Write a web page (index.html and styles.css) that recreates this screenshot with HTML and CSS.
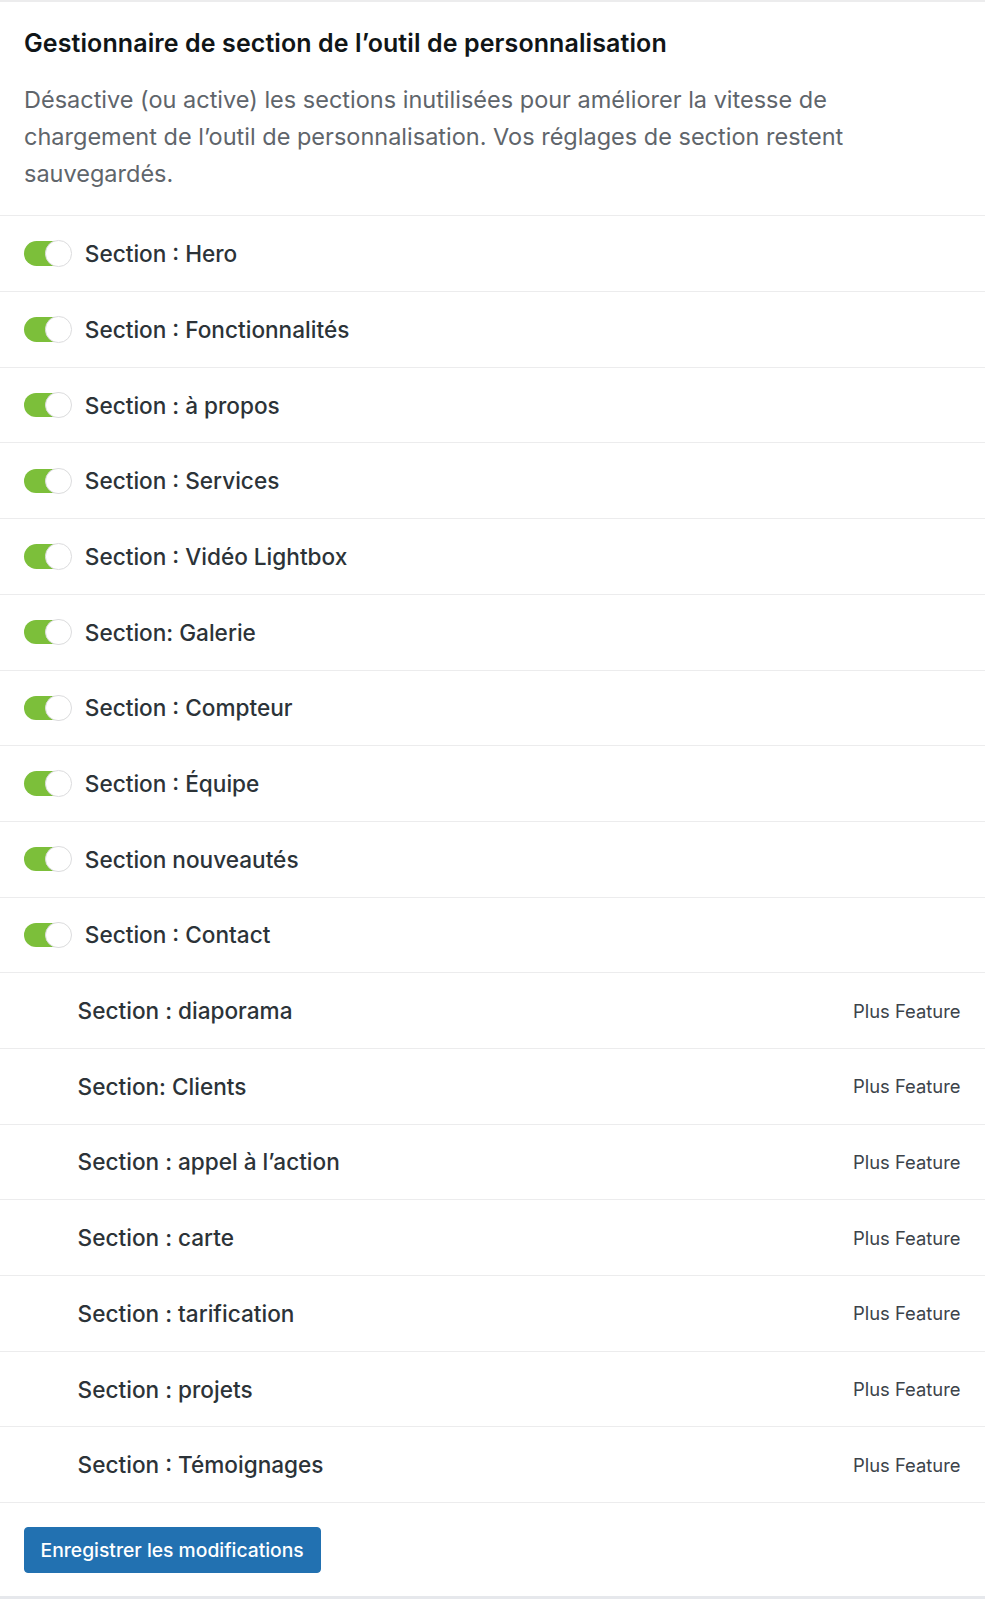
FILE: index.html
```html
<!DOCTYPE html>
<html lang="fr">
<head>
<meta charset="utf-8">
<link rel="stylesheet" href="styles.css">
</head>
<body>
<div class="panel">
  <div class="header">
    <h2 class="title">Gestionnaire de section de l’outil de personnalisation</h2>
    <p class="desc">Désactive (ou active) les sections inutilisées pour améliorer la vitesse de chargement de l’outil de personnalisation. Vos réglages de section restent sauvegardés.</p>
  </div>
  <ul class="list">
    <li class="row"><span class="toggle"><span class="knob"></span></span><span class="label">Section : Hero</span></li>
    <li class="row"><span class="toggle"><span class="knob"></span></span><span class="label">Section : Fonctionnalités</span></li>
    <li class="row"><span class="toggle"><span class="knob"></span></span><span class="label">Section : à propos</span></li>
    <li class="row"><span class="toggle"><span class="knob"></span></span><span class="label">Section : Services</span></li>
    <li class="row"><span class="toggle"><span class="knob"></span></span><span class="label">Section : Vidéo Lightbox</span></li>
    <li class="row"><span class="toggle"><span class="knob"></span></span><span class="label">Section: Galerie</span></li>
    <li class="row"><span class="toggle"><span class="knob"></span></span><span class="label">Section : Compteur</span></li>
    <li class="row"><span class="toggle"><span class="knob"></span></span><span class="label">Section : Équipe</span></li>
    <li class="row"><span class="toggle"><span class="knob"></span></span><span class="label">Section nouveautés</span></li>
    <li class="row"><span class="toggle"><span class="knob"></span></span><span class="label">Section : Contact</span></li>
    <li class="row plus"><span class="label">Section : diaporama</span><span class="badge">Plus Feature</span></li>
    <li class="row plus"><span class="label">Section: Clients</span><span class="badge">Plus Feature</span></li>
    <li class="row plus"><span class="label">Section : appel à l’action</span><span class="badge">Plus Feature</span></li>
    <li class="row plus"><span class="label">Section : carte</span><span class="badge">Plus Feature</span></li>
    <li class="row plus"><span class="label">Section : tarification</span><span class="badge">Plus Feature</span></li>
    <li class="row plus"><span class="label">Section : projets</span><span class="badge">Plus Feature</span></li>
    <li class="row plus"><span class="label">Section : Témoignages</span><span class="badge">Plus Feature</span></li>
  </ul>
  <div class="footer">
    <button class="save" type="button">Enregistrer les modifications</button>
  </div>
</div>
</body>
</html>
```
FILE: styles.css
```css
* { box-sizing: border-box; }
html, body { margin: 0; padding: 0; background: #fff; }
body {
  font-family: Inter, "Noto Sans", "Liberation Sans", sans-serif;
  color: #1d2327;
}
.panel {
  width: 985px;
  border-top: 2px solid #ececed;
  border-bottom: 3px solid #e6e8ec;
  background: #fff;
}
.header {
  padding: 25px 24px 23px 24px;
  border-bottom: 1px solid #ececed;
}
.title {
  margin: 0;
  font-size: 25px;
  line-height: 32px;
  font-weight: 600;
  color: #101517;
  letter-spacing: 0.1px;
}
.desc {
  margin: 21.5px 0 0 0;
  max-width: 880px;
  font-size: 23.5px;
  line-height: 37.3px;
  color: #5f656b;
}
.list {
  list-style: none;
  margin: 0;
  padding: 0;
}
.row {
  display: flex;
  align-items: center;
  height: 75.7px;
  padding: 0 24.5px 0 23.5px;
  border-bottom: 1px solid #ececed;
}
.toggle {
  position: relative;
  width: 47px;
  height: 24.5px;
  border-radius: 12.5px;
  background: #7cbf3a;
  margin-right: 14.3px;
  flex: none;
}
.knob {
  position: absolute;
  right: -1px;
  top: -1px;
  width: 26.5px;
  height: 26.5px;
  border-radius: 50%;
  background: #fff;
  border: 1px solid #dcdcde;
}
.label {
  font-size: 22.6px;
  color: #2c3338;
  font-weight: 500;
}
.row.plus { padding-left: 77.6px; }
.badge {
  margin-left: auto;
  font-size: 18.4px;
  color: #3c434a;
}
.footer {
  padding: 24px 23.5px 23px 23.5px;
}
.save {
  display: block;
  height: 46px;
  padding: 0 16px;
  border: 1px solid #2271b1;
  border-radius: 4px;
  background: #2271b1;
  color: #fff;
  font-family: inherit;
  font-size: 19.3px;
  font-weight: 500;
}
```
